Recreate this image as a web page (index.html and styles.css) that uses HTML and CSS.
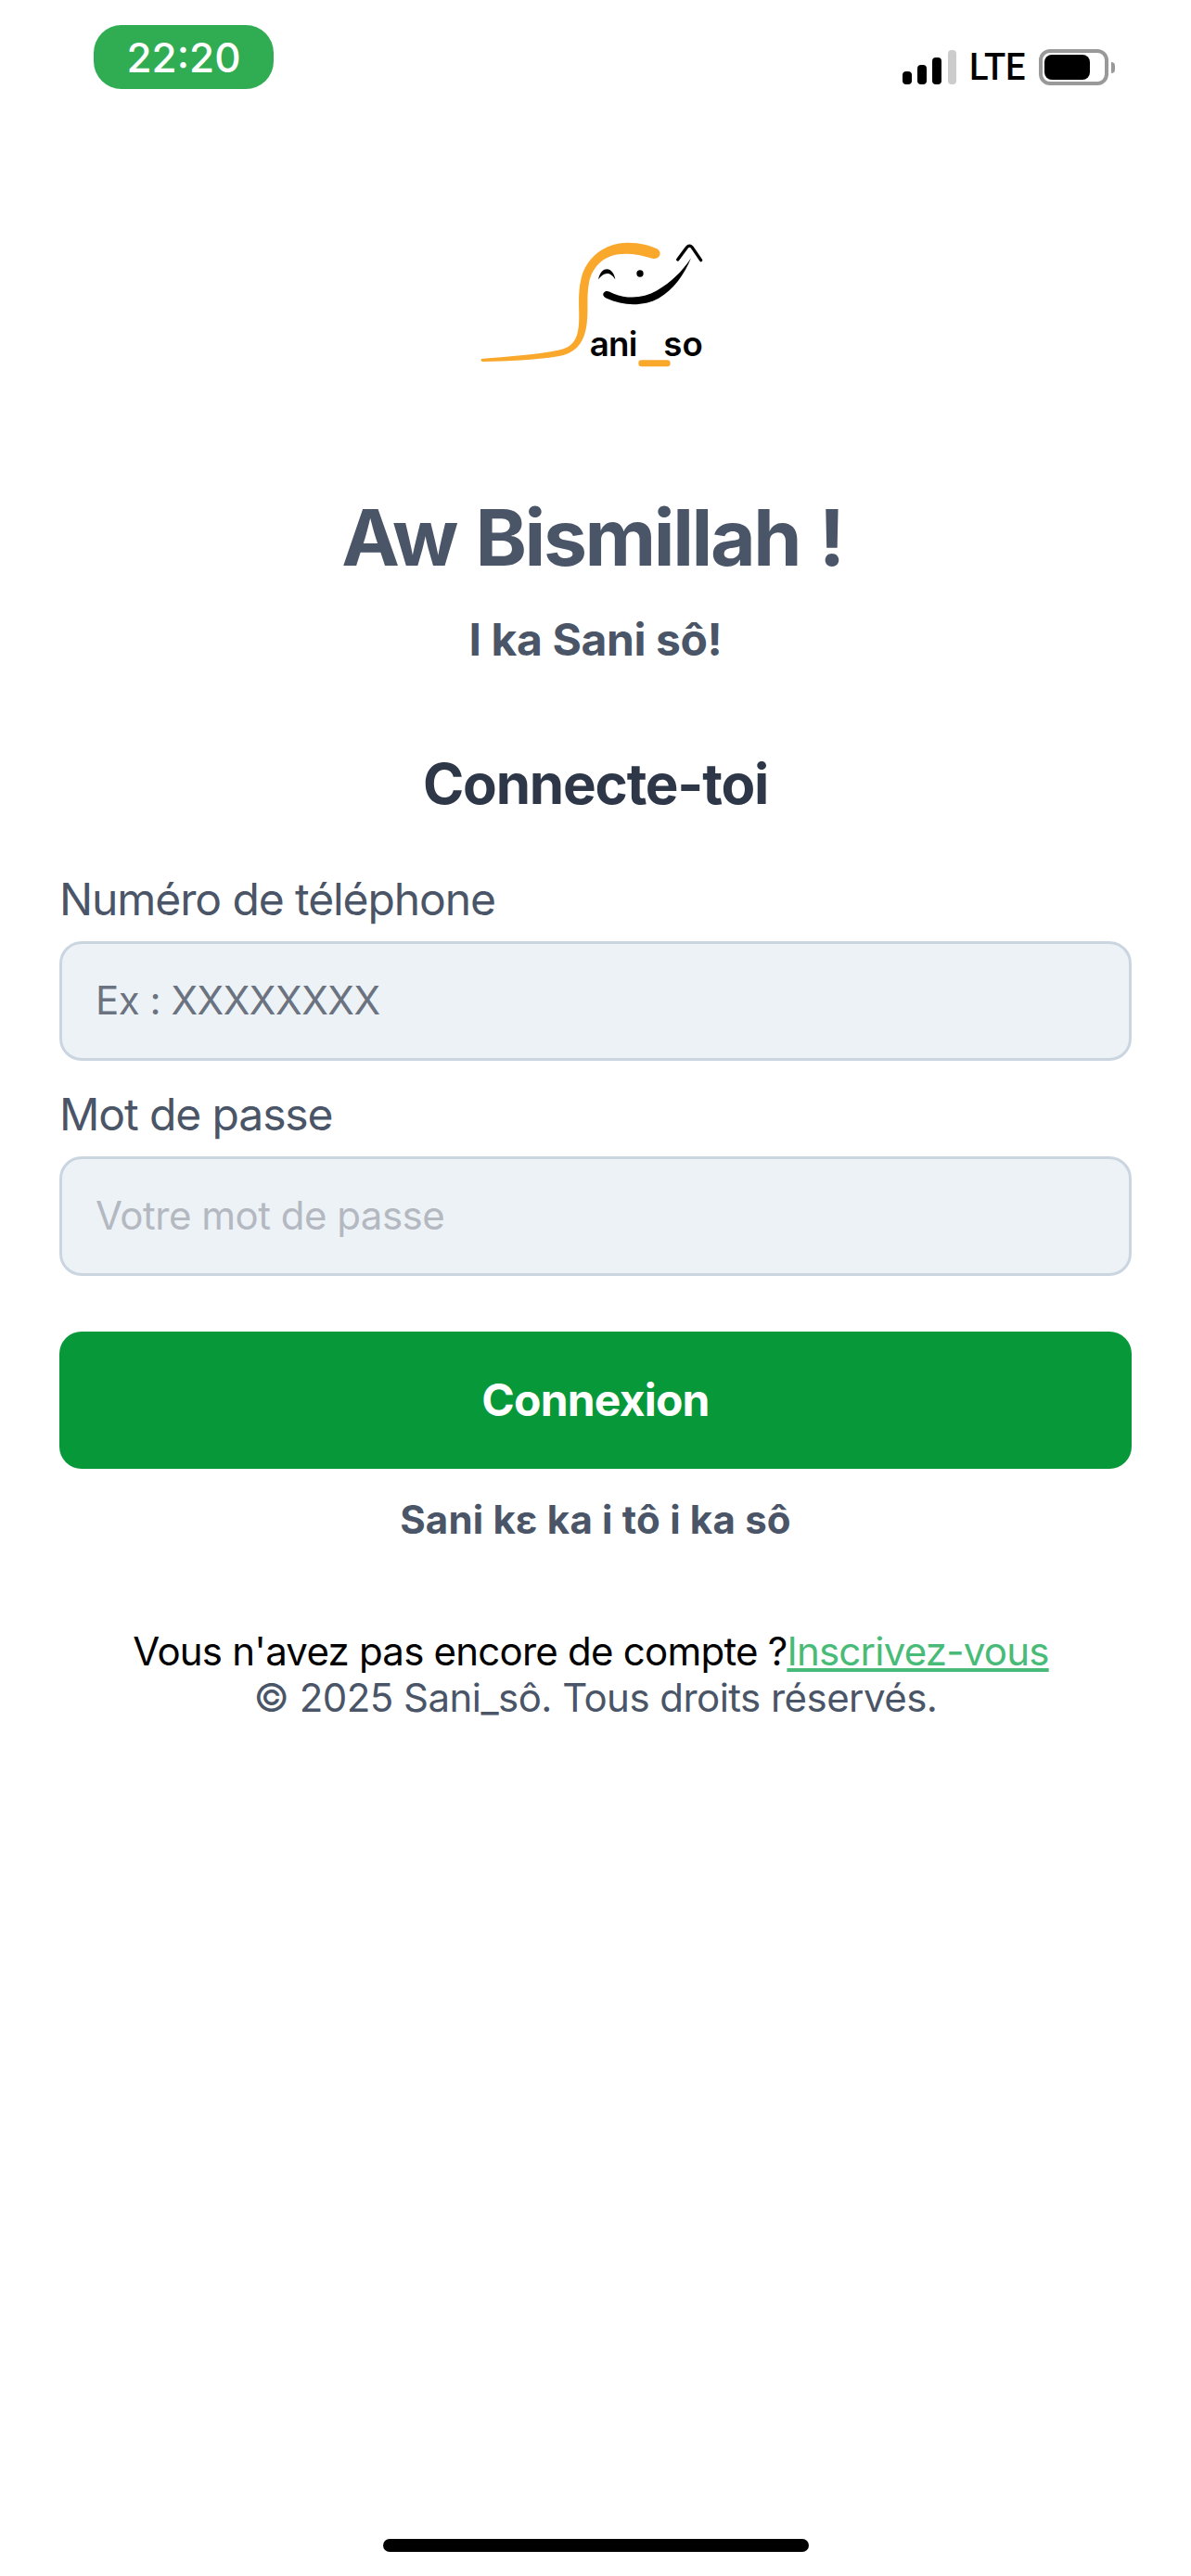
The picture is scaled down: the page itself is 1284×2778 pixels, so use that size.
FILE: index.html
```html
<!DOCTYPE html>
<html lang="fr">

<head>
    <meta charset="UTF-8">
    <meta name="viewport" content="width=device-width, initial-scale=1.0">
    <title>Sani_sô - Connexion</title>
    <link rel="stylesheet" href="styles.css">
</head>

<body>
    <div class="status-bar">
        <span class="status-time">22:20</span>
        <div class="status-right">
            <svg class="signal" width="58" height="37" viewBox="0 0 58 37">
                <rect x="0" y="23" width="10" height="14" rx="4" fill="#000" />
                <rect x="16" y="16" width="10" height="21" rx="4" fill="#000" />
                <rect x="32" y="8" width="10" height="29" rx="4" fill="#000" />
                <rect x="49" y="0" width="9" height="37" rx="4" fill="#ccc" />
            </svg>
            <span class="status-lte">LTE</span>
            <div class="battery">
                <div class="battery-level"></div>
            </div>
            <div class="battery-nub"></div>
        </div>
    </div>

    <main class="login">
        <svg class="logo" width="300" height="170" viewBox="0 0 900 510">
            <path d="M88 441 C170 433 260 428 335 413 C385 404 398 375 402 330 C406 290 396 235 410 180 C425 115 485 65 560 65 C600 65 635 75 655 85 C675 97 662 122 640 116 C600 105 565 98 530 103 C480 110 445 145 435 195 C425 245 436 295 425 345 C415 395 385 425 335 433 C260 445 170 449 92 450 C84 449 84 442 88 441 Z" fill="#f9a82b" />
            <path d="M465 184 C470 160 482 151 493 151 C506 151 516 163 520 184 C510 170 503 165 493 165 C483 165 474 172 465 184 Z" fill="#000" />
            <circle cx="600" cy="165" r="11" fill="#000" />
            <path d="M484 226 C492 218 500 224 515 230 C560 248 610 246 655 220 C700 194 735 160 765 115 C745 165 710 217 660 245 C610 272 545 270 492 245 C480 240 478 232 484 226 Z" fill="#000" />
            <path d="M722 120 L748 85 Q760 66 772 85 L797 122" fill="none" stroke="#000" stroke-width="10" stroke-linecap="round" stroke-linejoin="round" />
            <text class="logo-text logo-text-tight" x="437" y="431">ani</text>
            <text class="logo-text" x="676" y="431">so</text>
            <rect x="595" y="445" width="103" height="21" rx="10" fill="#f9a82b" />
        </svg>

        <h1 class="title">Aw Bismillah !</h1>
        <p class="subtitle">I ka Sani sô!</p>
        <h2 class="form-title">Connecte-toi</h2>

        <form class="form">
            <label class="field-label" for="phone">Numéro de téléphone</label>
            <div class="field-input field-value" id="phone">Ex : XXXXXXXX</div>
            <label class="field-label" for="password">Mot de passe</label>
            <div class="field-input field-hint" id="password">Votre mot de passe</div>
            <button class="submit" type="button">Connexion</button>
        </form>

        <p class="help">Sani kɛ ka i tô i ka sô</p>

        <p class="signup">Vous n'avez pas encore de compte ?<a href="#">Inscrivez-vous</a></p>
        <p class="copyright">© 2025 Sani_sô. Tous droits réservés.</p>
    </main>

    <div class="home-bar"></div>
</body>

</html>
```

FILE: styles.css
```css
* {
    box-sizing: border-box;
}

body {
    font-family: Inter, "Noto Sans", sans-serif;
    background-color: #fff;
    color: #4a5568;
    margin: 0;
    height: 2778px;
    display: flex;
    flex-direction: column;
    overflow: hidden;
}

.status-bar {
    display: flex;
    justify-content: space-between;
    align-items: flex-start;
    padding: 27px 82px 0 101px;
}

.status-time {
    width: 194px;
    height: 69px;
    display: flex;
    align-items: center;
    justify-content: center;
    background-color: #30ad53;
    color: #fff;
    border-radius: 30px;
    font-size: 44px;
    font-weight: 500;
}

.status-right {
    display: flex;
    align-items: center;
    margin-top: 26px;
}

.status-lte {
    width: 60px;
    font-family: Roboto, sans-serif;
    font-size: 40px;
    font-weight: 500;
    line-height: 39px;
    color: #000;
    margin-left: 14px;
    margin-right: 15px;
    transform: scaleX(0.95);
    transform-origin: left;
}

.battery {
    width: 75px;
    height: 39px;
    border: 4px solid #999;
    border-radius: 12px;
    padding: 2px;
}

.battery-level {
    width: 49px;
    height: 27px;
    background-color: #000;
    border-radius: 8px;
}

.battery-nub {
    width: 4px;
    height: 12px;
    margin-left: 3px;
    background-color: #999;
    border-radius: 0 4px 4px 0;
}

.login {
    padding: 144px 64px 0;
    display: flex;
    flex-direction: column;
    align-items: center;
    text-align: center;
}

.logo {
    display: block;
    margin-left: -4px;
}

.logo-text {
    font-family: Inter, sans-serif;
    font-size: 110px;
    font-weight: 600;
    fill: #000;
}

.logo-text-tight {
    letter-spacing: -2px;
}

.title {
    margin: 120px 0 0;
    padding-right: 7px;
    font-size: 84px;
    line-height: 100px;
    font-weight: 700;
    letter-spacing: -2.4px;
    word-spacing: 3px;
}

.subtitle {
    margin: 30px 0 0;
    font-size: 48px;
    line-height: 60px;
    font-weight: 700;
    letter-spacing: -0.4px;
}

.form-title {
    margin: 85px 0 0;
    font-size: 60px;
    line-height: 80px;
    font-weight: 700;
    letter-spacing: -1.2px;
    color: #2d3748;
}

.form {
    width: 100%;
    margin-top: 55px;
    display: flex;
    flex-direction: column;
    text-align: left;
}

.field-label {
    font-size: 48px;
    line-height: 60px;
    letter-spacing: -1.1px;
    margin-bottom: 15px;
}

.field-input {
    height: 129px;
    padding: 0 36px 2px;
    display: flex;
    align-items: center;
    background-color: #edf2f7;
    border: 3px solid #cbd5e0;
    border-radius: 24px;
    font-size: 42px;
    letter-spacing: -0.5px;
    margin-bottom: 28px;
}

.field-value {
    color: #6b7280;
}

.field-hint {
    color: #b4b9c1;
}

.submit {
    height: 148px;
    margin-top: 32px;
    padding-bottom: 3px;
    border: none;
    border-radius: 24px;
    background-color: #079839;
    color: #fff;
    font-family: inherit;
    font-size: 48px;
    font-weight: 700;
    letter-spacing: -0.8px;
}

.help {
    margin: 28px 0 0;
    font-size: 42px;
    line-height: 54px;
    font-weight: 700;
    letter-spacing: 0.2px;
}

.signup {
    margin: 90px 0 0;
    padding-right: 10px;
    font-size: 42px;
    line-height: 50px;
    letter-spacing: -0.77px;
    color: #000;
}

.signup a {
    color: #48bb78;
}

.copyright {
    margin: 0;
    font-size: 42px;
    line-height: 50px;
    letter-spacing: -0.54px;
}

.home-bar {
    width: 459px;
    height: 14px;
    margin: auto auto 26px;
    background-color: #000;
    border-radius: 7px;
}
```
